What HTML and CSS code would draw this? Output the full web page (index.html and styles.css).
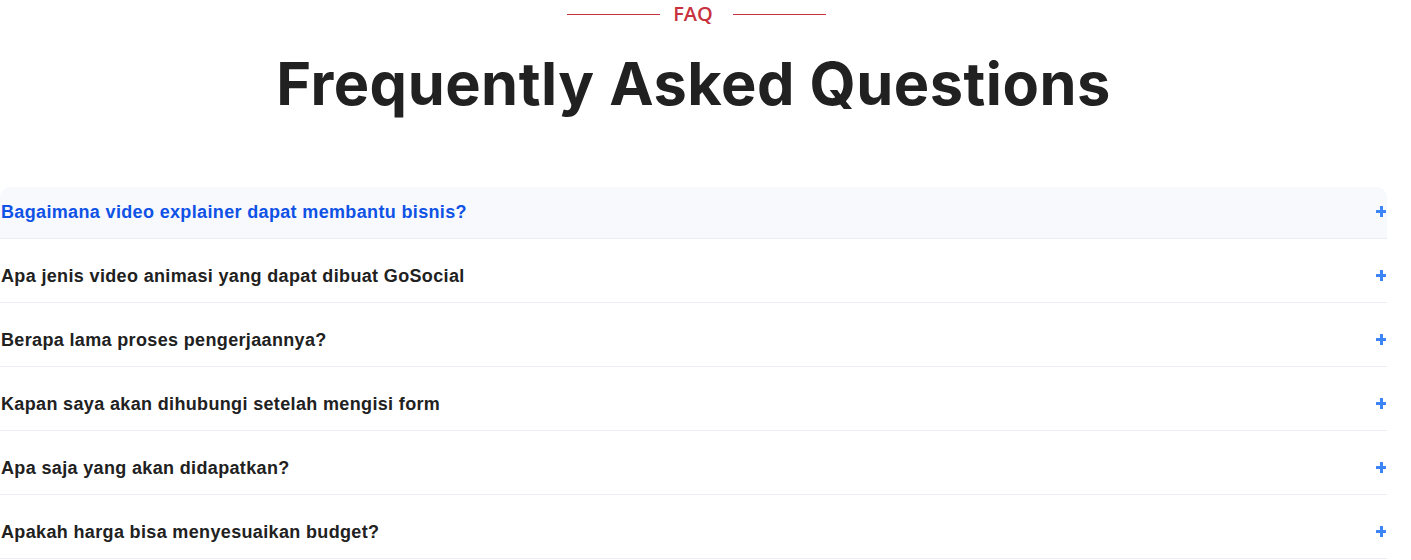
FILE: index.html
```html
<!DOCTYPE html>
<html lang="id">
<head>
<meta charset="utf-8">
<title>FAQ</title>
<link rel="stylesheet" href="styles.css">
</head>
<body>
<section class="faq">
  <div class="eyebrow">
    <span class="eyebrow-line"></span>
    <span class="eyebrow-text">FAQ</span>
    <span class="eyebrow-line"></span>
  </div>
  <h1 class="title">Frequently Asked Questions</h1>
  <div class="list">
    <div class="item active">
      <div class="head"><span class="q">Bagaimana video explainer dapat membantu bisnis?</span><span class="plus"></span></div>
    </div>
    <div class="item">
      <div class="head"><span class="q">Apa jenis video animasi yang dapat dibuat GoSocial</span><span class="plus"></span></div>
    </div>
    <div class="item">
      <div class="head"><span class="q">Berapa lama proses pengerjaannya?</span><span class="plus"></span></div>
    </div>
    <div class="item">
      <div class="head"><span class="q">Kapan saya akan dihubungi setelah mengisi form</span><span class="plus"></span></div>
    </div>
    <div class="item">
      <div class="head"><span class="q">Apa saja yang akan didapatkan?</span><span class="plus"></span></div>
    </div>
    <div class="item">
      <div class="head"><span class="q">Apakah harga bisa menyesuaikan budget?</span><span class="plus"></span></div>
    </div>
  </div>
</section>
</body>
</html>
```

FILE: styles.css
```css
html, body {
  margin: 0;
  padding: 0;
  background: #ffffff;
}
body {
  font-family: "Liberation Sans", Arial, sans-serif;
  color: #212121;
}
.faq {
  width: 1387px;
}
.eyebrow {
  display: flex;
  justify-content: center;
  align-items: center;
  height: 28px;
  padding-left: 6px;
}
.eyebrow-line {
  width: 93px;
  height: 1px;
  background: #c8313e;
}
.eyebrow-text {
  font-family: "Open Sans", "Noto Sans", sans-serif;
  font-weight: 600;
  font-size: 20px;
  color: #c8313e;
  line-height: 28px;
  margin: 0 20px 0 13px;
}
.title {
  margin: 15px 0 0;
  text-align: center;
  font-family: "Inter", "Noto Sans", sans-serif;
  font-weight: 700;
  font-size: 59.5px;
  line-height: 80px;
  color: #212121;
  letter-spacing: 0.5px;
}
.list {
  margin-top: 64px;
}
.item + .item {
  margin-top: 12px;
}
.head {
  height: 51px;
  display: flex;
  align-items: center;
  justify-content: space-between;
  border-bottom: 1px solid #ebedf3;
  padding: 0 1px 0 1px;
}
.item.active .head {
  background: #f8f9fd;
  border-radius: 10px 10px 0 0;
}
.q {
  font-weight: 700;
  font-size: 18px;
  letter-spacing: 0.35px;
  color: #212121;
}
.item.active .q {
  color: #0f52e6;
}
.plus {
  position: relative;
  width: 10px;
  height: 11px;
  margin-bottom: 2px;
}
.plus::before, .plus::after {
  content: "";
  position: absolute;
  background: #3d85f7;
}
.plus::before {
  left: 0;
  top: 4px;
  width: 10px;
  height: 3px;
}
.plus::after {
  left: 4px;
  top: 0;
  width: 3px;
  height: 11px;
}
```
